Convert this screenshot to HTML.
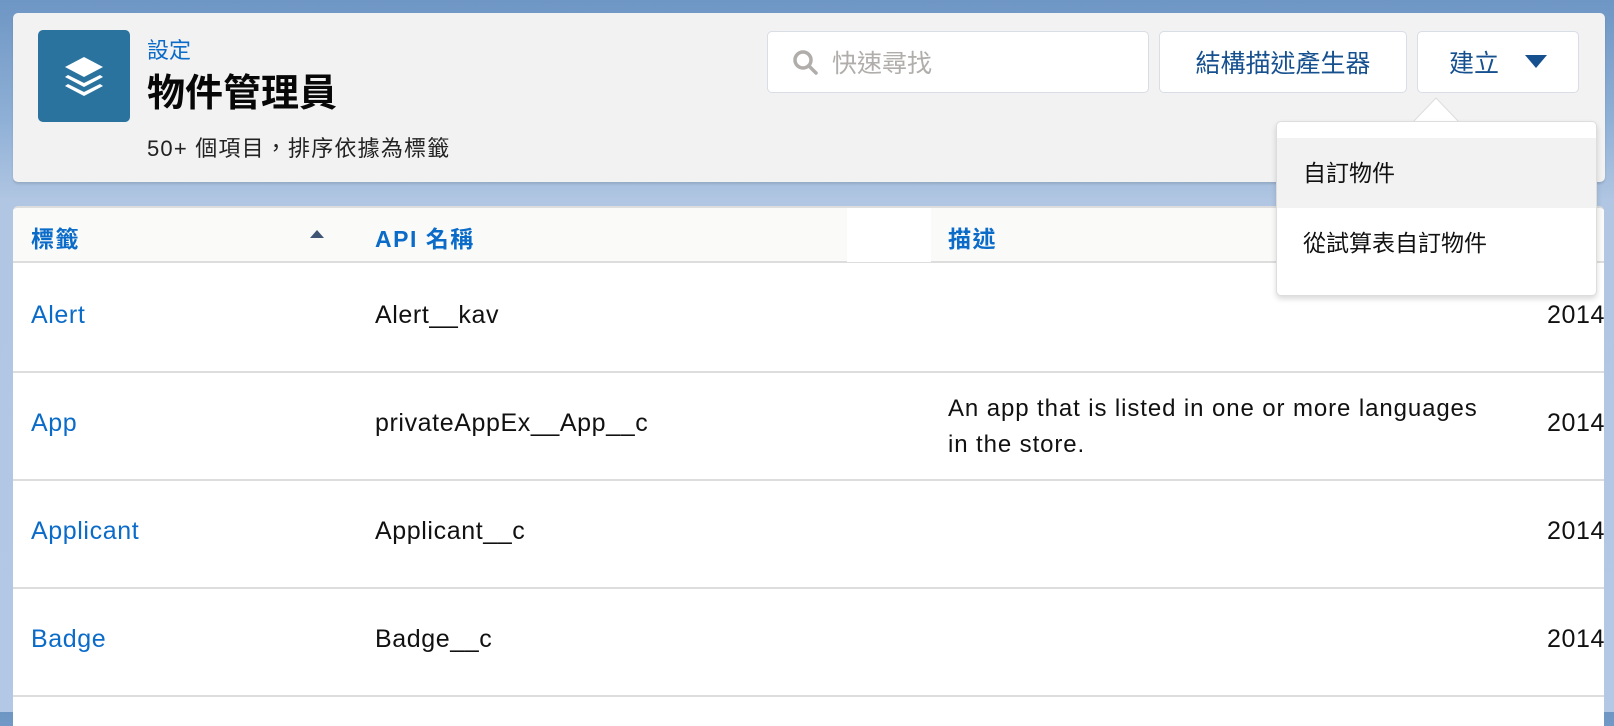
<!DOCTYPE html>
<html><head><meta charset="utf-8"><style>
*{box-sizing:border-box;margin:0;padding:0}
body{width:1614px;height:712px;overflow:hidden;background:linear-gradient(#6e96c4 0,#8fb0d6 120px,#b0c6e2 200px,#b3c8e4 712px);font-family:"Liberation Sans","Noto Sans CJK TC",sans-serif;position:relative}
.hdr{position:absolute;left:13px;top:13px;width:1592px;height:169px;background:#f2f2f2;border-radius:5px;box-shadow:0 2px 2px rgba(0,0,0,.12)}
.icon{position:absolute;left:38px;top:30px;width:92px;height:92px;background:#2a739e;border-radius:5px}
.t1{position:absolute;left:147px;top:33px;font-size:22px;color:#0a6bc9}
.t2{position:absolute;left:147px;top:62px;font-size:38px;font-weight:bold;color:#080707}
.t3{position:absolute;left:147px;top:131px;font-size:22px;letter-spacing:1.2px;color:#222}
.btn{position:absolute;top:31px;height:62px;background:#fff;border:1px solid #d8dde6;border-radius:5px;font-size:25px;color:#16508f;display:flex;align-items:center;justify-content:center}
.card{position:absolute;left:13px;top:206px;width:1591px;height:520px;background:#fff;border-top:2px solid #ddd;border-radius:5px 5px 0 0;overflow:hidden}
.th{position:absolute;top:0;left:0;width:100%;height:55px;background:#fafaf9;border-bottom:2px solid #ddd}
.th span{position:absolute;top:12px;font-size:23px;letter-spacing:1.5px;font-weight:bold;color:#0a6bc9}
.row{position:absolute;left:0;width:100%;border-bottom:2px solid #ddd}
.row span{position:absolute;font-size:25px;letter-spacing:0.6px;color:#111;white-space:nowrap}
.row .l{left:18px;color:#0a6bc9}
.dd{position:absolute;left:1276px;top:121px;width:321px;height:175px;background:#fff;border:1px solid #ddd;border-radius:5px;box-shadow:0 3px 6px rgba(0,0,0,.15)}
.dd div{position:absolute;left:0;width:100%;height:70px;font-size:23px;color:#111;padding-left:26px;line-height:70px}
</style></head><body>
<div class="hdr"></div>
<div class="icon"><svg width="92" height="92" viewBox="0 0 92 92"><path d="M46 27 L65 37 L46 47 L27 37Z" fill="#fff"/><path d="M30 45 L46 53 L62 45 L65 47 L46 57 L27 47Z" fill="#fff"/><path d="M30 54 L46 62 L62 54 L65 56 L46 66 L27 56Z" fill="#fff"/></svg></div>
<div class="t1">設定</div>
<div class="t2">物件管理員</div>
<div class="t3">50+ 個項目，排序依據為標籤</div>
<div class="btn" style="left:767px;width:382px;justify-content:flex-start;color:#b0adab"><svg style="margin-left:24px;margin-right:14px" width="26" height="26" viewBox="0 0 26 26"><circle cx="11" cy="11" r="8" fill="none" stroke="#b0adab" stroke-width="3.5"/><path d="M17 17L24 24" stroke="#b0adab" stroke-width="3.5" stroke-linecap="round"/></svg>快速尋找</div>
<div class="btn" style="left:1159px;width:248px">結構描述產生器</div>
<div class="btn" style="left:1417px;width:162px">建立<svg style="margin-left:26px" width="22" height="14" viewBox="0 0 22 14"><path d="M0 0H22L11 13Z" fill="#16508f"/></svg></div>
<div class="card">
<div class="th"><span style="left:18px">標籤</span><svg style="position:absolute;left:297px;top:21px" width="14" height="10"><path d="M0 9L7 1L14 9Z" fill="#3e5673"/></svg><span style="left:362px">API 名稱</span><div style="position:absolute;left:834px;width:84px;top:0;height:54px;background:#fff"></div><span style="left:935px">描述</span></div>
<div class="row" style="top:55px;height:110px"><span class="l" style="top:38px">Alert</span><span style="left:362px;top:38px">Alert__kav</span><span style="left:1534px;top:38px">2014</span></div>
<div class="row" style="top:165px;height:108px"><span class="l" style="top:36px">App</span><span style="left:362px;top:36px">privateAppEx__App__c</span><span style="left:935px;top:18px;line-height:36px;font-size:24px;letter-spacing:0.9px">An app that is listed in one or more languages<br>in the store.</span><span style="left:1534px;top:36px">2014</span></div>
<div class="row" style="top:273px;height:108px"><span class="l" style="top:36px">Applicant</span><span style="left:362px;top:36px">Applicant__c</span><span style="left:1534px;top:36px">2014</span></div>
<div class="row" style="top:381px;height:108px"><span class="l" style="top:36px">Badge</span><span style="left:362px;top:36px">Badge__c</span><span style="left:1534px;top:36px">2014</span></div>
</div>
<svg style="position:absolute;left:1413px;top:97px" width="48" height="26"><path d="M0 25L23 1L46 25" fill="#fff" stroke="#ddd" stroke-width="1"/></svg>
<div class="dd"><div style="top:16px;background:#f2f2f2">自訂物件</div><div style="top:86px">從試算表自訂物件</div></div>
</body></html>
